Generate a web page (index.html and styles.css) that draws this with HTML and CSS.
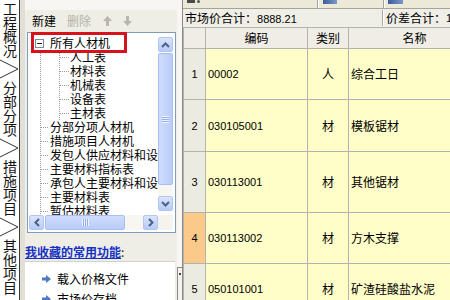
FILE: index.html
```html
<!DOCTYPE html>
<html>
<head>
<meta charset="utf-8">
<link rel="stylesheet" href="styles.css">
</head>
<body>
<div class="app">
  <nav class="tabs">
    <div class="tab">工程概况</div>
    <svg class="chev" width="19" height="21" viewBox="0 0 19 21"><polyline points="0,2 18,11 0,20" fill="none" stroke="#333" stroke-width="1"/></svg>
    <div class="tab">分部分项</div>
    <svg class="chev" width="19" height="21" viewBox="0 0 19 21"><polyline points="0,2 18,11 0,20" fill="none" stroke="#333" stroke-width="1"/></svg>
    <div class="tab">措施项目</div>
    <svg class="chev" width="19" height="21" viewBox="0 0 19 21"><polyline points="0,2 18,11 0,20" fill="none" stroke="#333" stroke-width="1"/></svg>
    <div class="tab">其他项目</div>
  </nav>

  <aside class="side">
    <div class="pane">
      <div class="ptool">
        <span class="tbtn">新建</span>
        <span class="tbtn dis">删除</span>
        <svg class="tarrow" width="9" height="10" viewBox="0 0 9 10"><polygon points="4.5,0 9,5 6,5 6,10 3,10 3,5 0,5" fill="#b9b7ad"/></svg>
        <svg class="tarrow" width="9" height="10" viewBox="0 0 9 10"><polygon points="4.5,10 9,5 6,5 6,0 3,0 3,5 0,5" fill="#b9b7ad"/></svg>
      </div>

      <div class="treebox">
        <div class="tree">
          <div class="root">
            <svg class="exp" width="9" height="9" viewBox="0 0 9 9"><rect x="0.5" y="0.5" width="8" height="8" fill="#fff" stroke="#7f8a96"/><line x1="2" y1="4.5" x2="7" y2="4.5" stroke="#222"/></svg>
            <span>所有人材机</span>
          </div>
          <div class="lvl1">
            <div class="kids">
              <div class="node">人工表</div>
              <div class="node">材料表</div>
              <div class="node">机械表</div>
              <div class="node">设备表</div>
              <div class="node">主材表</div>
            </div>
            <div class="node top">分部分项人材机</div>
            <div class="node top">措施项目人材机</div>
            <div class="node top">发包人供应材料和设备表</div>
            <div class="node top">主要材料指标表</div>
            <div class="node top">承包人主要材料和设备表</div>
            <div class="node top">主要材料表</div>
            <div class="node top">暂估材料表</div>
          </div>
        </div>

        <div class="vscroll">
          <div class="sbtn"><svg width="9" height="6" viewBox="0 0 9 6"><polyline points="1,5 4.5,1.5 8,5" fill="none" stroke="#4d6185" stroke-width="2"/></svg></div>
          <div class="vthumb"><span class="grip"></span></div>
          <div class="track"></div>
          <div class="sbtn"><svg width="9" height="6" viewBox="0 0 9 6"><polyline points="1,1 4.5,4.5 8,1" fill="none" stroke="#4d6185" stroke-width="2"/></svg></div>
        </div>

        <div class="hscroll">
          <div class="sbtn"><svg width="6" height="9" viewBox="0 0 6 9"><polyline points="5,1 1.5,4.5 5,8" fill="none" stroke="#4d6185" stroke-width="2"/></svg></div>
          <div class="hthumb"><span class="hgrip"></span></div>
          <div class="track"></div>
          <div class="sbtn"><svg width="6" height="9" viewBox="0 0 6 9"><polyline points="1,1 4.5,4.5 1,8" fill="none" stroke="#4d6185" stroke-width="2"/></svg></div>
        </div>

        <div class="corner"></div>
        <div class="mark"></div>
      </div>

      <div class="favtitle"><span class="favlink">我收藏的常用功能</span>:</div>
      <div class="favlist">
        <div class="fav"><svg width="9" height="8" viewBox="0 0 9 8"><polygon points="0,2.5 4,2.5 4,0 9,4 4,8 4,5.5 0,5.5" fill="#4f78c4"/></svg><span>载入价格文件</span></div>
        <div class="fav"><svg width="9" height="8" viewBox="0 0 9 8"><polygon points="0,2.5 4,2.5 4,0 9,4 4,8 4,5.5 0,5.5" fill="#4f78c4"/></svg><span>市场价存档</span></div>
      </div>
    </div>
    <div class="edge"><div class="splitter"><span class="sdot"></span></div></div>
  </aside>

  <main class="main">
    <div class="toolbar">
      <span class="ic ic-a"></span><span class="ic ic-dot"></span>
      <span class="sep sep1"></span>
      <span class="ic ic-blue ic-b"></span>
      <span class="sep sep2"></span>
      <span class="ic ic-blue ic-c"></span>
    </div>
    <div class="status">
      <span class="s1">市场价合计：<span class="num">8888.21</span></span>
      <span class="s2">价差合计：<span class="num">1</span></span>
    </div>
    <table class="grid">
      <colgroup><col class="c0"><col class="c1"><col class="c2"><col class="c3"></colgroup>
      <tr class="hd"><th></th><th>编码</th><th>类别</th><th>名称</th></tr>
      <tr class="r1"><td class="rn">1</td><td class="code">00002</td><td class="typ">人</td><td class="nm">综合工日</td></tr>
      <tr class="r2"><td class="rn">2</td><td class="code">030105001</td><td class="typ">材</td><td class="nm">模板锯材</td></tr>
      <tr class="r3"><td class="rn">3</td><td class="code">030113001</td><td class="typ">材</td><td class="nm">其他锯材</td></tr>
      <tr class="r4"><td class="rn cur">4</td><td class="code">030113002</td><td class="typ">材</td><td class="nm">方木支撑</td></tr>
      <tr class="r5"><td class="rn">5</td><td class="code">050101001</td><td class="typ">材</td><td class="nm">矿渣硅酸盐水泥</td></tr>
    </table>
  </main>
</div>
</body>
</html>
```

FILE: styles.css
```css
* { box-sizing: border-box; }
html, body { margin: 0; padding: 0; }
body {
  width: 450px; height: 300px; overflow: hidden; background: #fff;
  font-family: "Liberation Sans", "Noto Sans CJK SC", sans-serif;
  font-size: 12px; color: #000;
}
.app { display: flex; height: 300px; }

/* vertical tabs */
.tabs {
  width: 20px; flex: none; background: #fff;
  border-right: 1px solid #3a3a3a;
  display: flex; flex-direction: column; overflow: hidden;
}
.tab {
  height: 58px; flex: none; padding-top: 2px;
  writing-mode: vertical-rl;
  font-family: "Noto Sans CJK SC", sans-serif;
  font-size: 14px; line-height: 19px; color: #111;
}
.chev { display: block; flex: none; }

/* left side */
.side {
  width: 162px; flex: none; display: flex; overflow: hidden;
  background: #f7f6f2; border-left: 5px solid #e2e0d6;
}
.pane {
  width: 152px; flex: none; margin-top: 10px; background: #efeee6;
  border-radius: 3px 3px 0 0;
  display: flex; flex-direction: column; overflow: hidden;
}
.ptool { height: 22px; flex: none; display: flex; align-items: center; padding-left: 7px; line-height: 14px; }
.tbtn { margin-right: 11px; font-family: "Noto Sans CJK SC", sans-serif; }
.tbtn.dis { color: #b3b1a6; margin-right: 12px; }
.tarrow { margin-right: 11px; }

.treebox {
  margin-left: 2px; width: 149px; height: 201px; flex: none;
  border: 1px solid #7f9db9; background: #fff;
  padding: 0 2px 2px 0;
  display: grid; grid-template-columns: 1fr 15px; grid-template-rows: 1fr 15px;
  position: relative;
}
.tree {
  overflow: hidden; padding-top: 3px; white-space: nowrap;
  line-height: 14px; font-family: "Noto Sans CJK SC", sans-serif;
}
.root { height: 14px; display: flex; align-items: center; padding-left: 7px; }
.exp { margin-right: 6px; flex: none; }
.lvl1 { margin-left: 12px; border-left: 1px dotted #9a9a9a; }
.kids { margin-left: 18px; border-left: 1px dotted #9a9a9a; }
.node { height: 14px; display: flex; align-items: center; }
.node::before {
  content: ""; flex: none; width: 9px; margin-right: 1px;
  border-top: 1px dotted #9a9a9a;
}
.node.top::before { width: 7px; margin-right: 2px; }

.vscroll {
  grid-column: 2; grid-row: 1;
  display: flex; flex-direction: column; padding: 4px 0 4px;
}
.hscroll {
  grid-column: 1; grid-row: 2;
  display: flex; padding-left: 1px;
}
.corner { grid-column: 2; grid-row: 2; background: #f4f3ee; }
.sbtn {
  width: 15px; height: 15px; flex: none;
  background: linear-gradient(#dae5fd, #b7cbf7);
  border: 1px solid #b1c5f3; border-radius: 2px;
  display: flex; align-items: center; justify-content: center;
}
.track { flex: 1; background: #f7f6f1; }
.vthumb {
  height: 132px; margin-top: 1px; flex: none;
  background: linear-gradient(to right, #cfdcfd, #b9ccf8);
  border: 1px solid #a9bef0; border-radius: 2px;
  display: flex; align-items: center; justify-content: center;
}
.grip {
  width: 7px; height: 7px;
  background: repeating-linear-gradient(#eef3fe 0 1px, #8fb0f0 1px 2px);
}
.hthumb {
  width: 80px; margin-left: 1px; flex: none;
  background: linear-gradient(#cfdcfd, #b9ccf8);
  border: 1px solid #a9bef0; border-radius: 2px;
  display: flex; align-items: center; justify-content: center;
}
.hgrip {
  width: 7px; height: 7px;
  background: repeating-linear-gradient(to right, #eef3fe 0 1px, #8fb0f0 1px 2px);
}
.mark {
  position: absolute; left: 3px; top: -1px;
  width: 96px; height: 21px;
  border: 3px solid #d6121c;
}

.favtitle {
  height: 28px; flex: none; padding-top: 12px; line-height: 14px;
  font-family: "Noto Sans CJK SC", sans-serif; color: #222;
}
.favlink { color: #1530c4; font-weight: bold; text-decoration: underline; }
.favlist {
  flex: 1 1 auto; min-height: 0; width: 150px; background: #fff;
  border-top: 1px solid #d4d2c8; padding-top: 7px;
}
.fav {
  height: 20px; display: flex; align-items: center; gap: 6px; padding-left: 17px;
  font-family: "Noto Sans CJK SC", sans-serif; line-height: 14px;
}

.edge { width: 5px; flex: none; }
.splitter {
  margin-top: 267px; height: 40px;
  border: 1px solid #8a8a8a; border-right: 0; background: #f4f3ee;
  padding: 5px 0 0 1px;
}
.sdot { display: block; width: 2px; height: 2px; background: #444; }

/* main area */
.main {
  flex: 1; min-width: 0; overflow: hidden;
  border-left: 1px solid #8a8a8a;
  display: flex; flex-direction: column; background: #fff;
}
.toolbar {
  height: 9px; flex: none; background: #ece9d8;
  border-bottom: 1px solid #a5a49c;
  display: flex; align-items: flex-start;
}
.ic { display: block; flex: none; }
.ic-a { margin-left: 4px; width: 8px; height: 3px; background: #4b4b4b; }
.ic-dot { margin-left: 2px; width: 3px; height: 3px; border-radius: 50%; background: #555; }
.sep { display: block; flex: none; width: 2px; height: 8px; border-left: 1px solid #a6a59d; border-right: 1px solid #fff; }
.sep1 { margin-left: 117px; }
.sep2 { margin-left: 46px; }
.ic-blue { height: 4px; background: linear-gradient(to right, #3a5c9c, #7d98c8); }
.ic-b { margin-left: 4px; width: 14px; }
.ic-c { margin-left: 3px; width: 15px; }

.status {
  height: 18px; flex: none; background: #efeee7;
  display: flex; align-items: center; white-space: nowrap;
  font-family: "Noto Sans CJK SC", sans-serif; line-height: 14px;
}
.num { font-family: "Liberation Sans", sans-serif; font-size: 11px; }
.s1 { width: 199px; flex: none; padding-left: 2px; }
.s2 {
  padding-left: 3px; height: 16px; display: flex; align-items: center;
  border-left: 1px solid #a7a6a0; box-shadow: inset 1px 0 #fff;
}

.grid {
  border-collapse: collapse; table-layout: fixed; width: 297px; flex: none;
  font-family: "Noto Sans CJK SC", sans-serif;
}
.c0 { width: 22px; }
.c1 { width: 102px; }
.c2 { width: 41px; }
.c3 { width: 132px; }
.grid th, .grid td {
  border: 1px solid #b4b4ae; padding: 0; line-height: 14px;
  vertical-align: middle; white-space: nowrap; overflow: hidden;
}
.grid th { background: #efede5; font-weight: normal; text-align: center; }
.grid td { background: #fffec8; }
.grid td.rn {
  background: #ecebe2; text-align: center;
  font-family: "Liberation Sans", sans-serif; font-size: 11px;
}
.grid td.rn.cur { background: #fbc98a; }
.grid td.code { padding-left: 2px; font-family: "Liberation Sans", sans-serif; font-size: 11px; }
.grid td.typ { text-align: center; }
.grid td.nm { padding-left: 2px; }
.hd { height: 21px; }
.r1 { height: 51px; }
.r2 { height: 52px; }
.r3 { height: 61px; }
.r4 { height: 51px; }
.r5 { height: 51px; }
```
